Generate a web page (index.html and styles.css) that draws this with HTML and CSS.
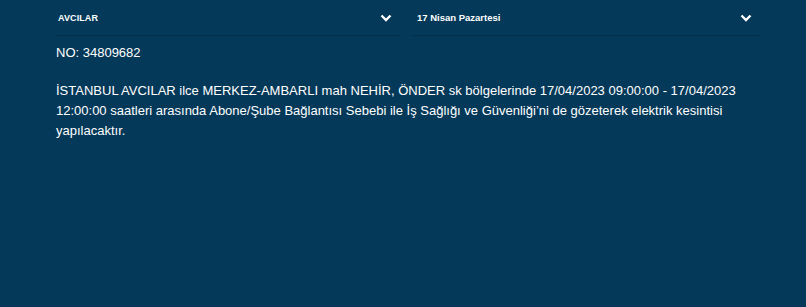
FILE: index.html
```html
<!doctype html>
<html lang="tr">

<head>
  <meta charset="UTF-8" />
  <meta name="viewport" content="width=device-width, initial-scale=1.0" />
  <title>Elektrik Kesintisi</title>
  <link rel="stylesheet" href="styles.css">
</head>

<body>
  <div class="outage">
    <div class="filters">
      <div class="filter-select">
        <span class="filter-label">AVCILAR</span>
        <svg class="chevron" width="12" height="8" viewBox="0 0 12 8">
          <polyline points="1.5,1.5 6,6 10.5,1.5" fill="none" stroke="#ffffff" stroke-width="2.4" />
        </svg>
      </div>
      <div class="filter-select date-select">
        <span class="filter-label">17 Nisan Pazartesi</span>
        <svg class="chevron" width="12" height="8" viewBox="0 0 12 8">
          <polyline points="1.5,1.5 6,6 10.5,1.5" fill="none" stroke="#ffffff" stroke-width="2.4" />
        </svg>
      </div>
    </div>

    <div class="outage-no">NO: 34809682</div>

    <p class="outage-text">İSTANBUL AVCILAR ilce MERKEZ-AMBARLI mah NEHİR, ÖNDER sk bölgelerinde 17/04/2023 09:00:00 - 17/04/2023 12:00:00 saatleri arasında Abone/Şube Bağlantısı Sebebi ile İş Sağlığı ve Güvenliği’ni de gözeterek elektrik kesintisi yapılacaktır.</p>
  </div>
</body>

</html>
```

FILE: styles.css
```css
body,
html {
  background-color: #053959;
  color: #ffffff;
  margin: 0;
  padding: 0;
  height: 100%;
}

.outage {
  width: 706px;
  padding-left: 55px;
  font-family: "Liberation Sans", Arial, sans-serif;
}

/* Dropdown filters */
.filters {
  display: grid;
  grid-template-columns: 345px 348px;
  gap: 12px;
}

.filter-select {
  display: flex;
  align-items: center;
  justify-content: space-between;
  height: 35px;
  padding: 0 8px 0 3px;
  border-bottom: 1px solid #033049;
}

.date-select {
  padding-left: 5px;
}

.filter-label {
  font-size: 9px;
  font-weight: bold;
  letter-spacing: 0.1px;
}

.date-select .filter-label {
  font-size: 9.5px;
  letter-spacing: 0;
}

.chevron {
  display: block;
  margin-top: 1px;
}

/* Outage details */
.outage-no {
  margin-top: 7px;
  font-size: 13px;
  line-height: 20px;
  padding-left: 1px;
}

.outage-text {
  margin: 18px 0 0;
  padding-left: 1px;
  font-size: 13px;
  line-height: 20px;
}
```
